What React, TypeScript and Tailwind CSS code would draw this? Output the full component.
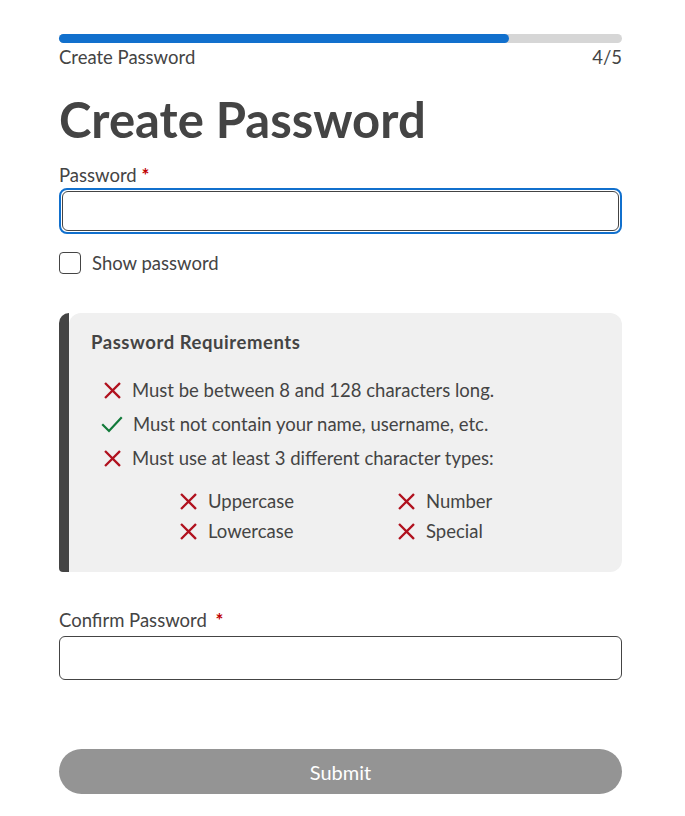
import { useState } from 'react';

const font = { fontFamily: 'Lato, "Noto Sans", sans-serif' };

function Cross({ className = '' }: { className?: string }) {
    return (
        <svg viewBox="0 0 20 20" className={`w-[19px] h-[19px] shrink-0 ${className}`} fill="none">
            <path d="M3 3 L17 17 M17 3 L3 17" stroke="#b0111e" strokeWidth="2.4" strokeLinecap="square" />
        </svg>
    );
}

function Check() {
    return (
        <svg viewBox="0 0 22 20" className="w-[22px] h-[20px] shrink-0 -ml-[2px]" fill="none">
            <path d="M2 11 L8 17 L20 4" stroke="#127a3a" strokeWidth="2.2" strokeLinecap="square" />
        </svg>
    );
}

export default function App() {
    const [show, setShow] = useState(false);

    return (
        <div className="min-h-[816px] bg-white text-[#444444]" style={font}>
            <div className="w-[563px] ml-[59px] pt-[34px]">
                <div className="h-[9px] w-full rounded-full bg-[#d6d6d6]">
                    <div className="h-full w-[450px] rounded-full bg-[#1170cd]" />
                </div>
                <div className="flex justify-between text-[18.5px] leading-[24px] mt-[2px]">
                    <span>Create Password</span>
                    <span>4/5</span>
                </div>

                <h1 className="text-[49px] leading-[56px] font-bold mt-[22px]">Create Password</h1>

                <label className="block text-[18.5px] leading-[24px] mt-[16px]">
                    Password <span className="text-[#c00000] font-bold">*</span>
                </label>
                <div className="mt-[1px] rounded-[8px] border-2 border-[#1170cd] p-[1px]">
                    <input
                        type={show ? 'text' : 'password'}
                        className="block w-full h-[40px] rounded-[6px] border border-[#444444] outline-none px-3 text-[18px]"
                    />
                </div>

                <label className="flex items-center gap-[11px] mt-[17px] text-[18.5px] leading-[24px]">
                    <input
                        type="checkbox"
                        checked={show}
                        onChange={() => setShow(!show)}
                        className="appearance-none w-[22px] h-[22px] rounded-[4px] border border-[#444444] bg-white"
                    />
                    Show password
                </label>

                <div className="mt-[38px] flex h-[259px]">
                    <div className="w-[10px] bg-[#444444] rounded-tl-[10px] rounded-bl-[4px]" />
                    <div className="flex-1 bg-[#f0f0f0] rounded-r-[12px] rounded-tl-[12px] pl-[22px] pt-[17px]">
                        <h2 className="text-[18.5px] leading-[24px] font-bold tracking-[0.03em]">Password Requirements</h2>
                        <ul className="mt-[24px] pl-[12px] flex flex-col gap-[10px] text-[18.5px] leading-[24px]">
                            <li className="flex items-center gap-[10px]">
                                <Cross />
                                Must be between 8 and 128 characters long.
                            </li>
                            <li className="flex items-center gap-[10px]">
                                <Check />
                                Must not contain your name, username, etc.
                            </li>
                            <li className="flex items-center gap-[10px]">
                                <Cross />
                                Must use at least 3 different character types:
                            </li>
                        </ul>
                        <div className="grid grid-cols-[218px_1fr] ml-[88px] mt-[19px] gap-y-[6px] text-[18.5px] leading-[24px]">
                            <div className="flex items-center gap-[10px]"><Cross />Uppercase</div>
                            <div className="flex items-center gap-[10px]"><Cross />Number</div>
                            <div className="flex items-center gap-[10px]"><Cross />Lowercase</div>
                            <div className="flex items-center gap-[10px]"><Cross />Special</div>
                        </div>
                    </div>
                </div>

                <label className="block text-[18.5px] leading-[24px] mt-[36px]">
                    Confirm Password <span className="ml-[4px] text-[#c00000] font-bold">*</span>
                </label>
                <input
                    type="password"
                    className="block mt-[4px] w-full h-[44px] rounded-[6px] border border-[#444444] outline-none px-3 text-[18px]"
                />

                <button
                    type="button"
                    className="mt-[69px] w-full h-[45px] rounded-full bg-[#949494] text-white text-[20px]"
                >
                    Submit
                </button>
            </div>
        </div>
    );
}
